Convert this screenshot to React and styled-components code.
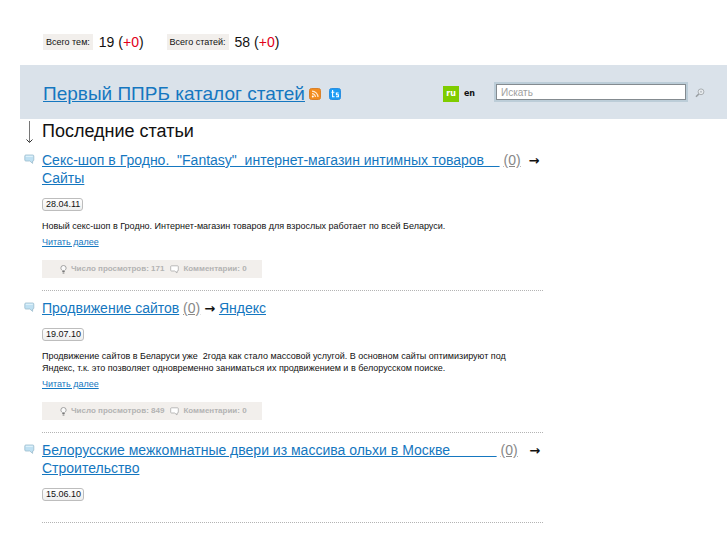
import React from 'react';
import styled, { createGlobalStyle } from 'styled-components';

const GlobalStyle = createGlobalStyle`
  body {
    margin: 0;
    background: #fff;
    color: #111;
    font-family: "Liberation Sans", Arial, Helvetica, sans-serif;
    font-size: 9px;
    line-height: 12px;
  }
`;

const Page = styled.div`
  padding: 34px 0 20px 20px;
`;

const Counters = styled.div`
  display: flex;
  gap: 23px;
  padding-left: 23px;
`;

const Counter = styled.div`
  display: flex;
  align-items: center;
  gap: 6px;
  font-size: 14px;
  line-height: 16px;
`;

const CounterLabel = styled.span`
  padding: 0 3px;
  background: #f2efec;
  font-size: 9px;
`;

const Added = styled.span`
  color: #e2001a;
`;

const Header = styled.header`
  display: flex;
  align-items: center;
  min-height: 54px;
  margin-top: 15px;
  padding: 0 20px 0 23px;
  box-sizing: border-box;
  background: #dae2ea;
`;

const SiteTitle = styled.h1`
  margin: 0;
  font-size: 19px;
  line-height: 24px;
  font-weight: 400;
  padding-top: 4px;
`;

const Link = styled.a`
  color: #1577c0;
  text-decoration: underline;
`;

const Feeds = styled.div`
  display: flex;
  gap: 8px;
  margin-left: 4px;
  padding-top: 4px;
`;

const IconLink = styled.a`
  display: block;
  height: 12px;

  svg {
    display: block;
  }
`;

const Tools = styled.div`
  display: flex;
  align-items: center;
  margin-left: auto;
`;

const Languages = styled.nav`
  display: flex;
  align-items: center;
  gap: 5px;
  padding-top: 3px;
  font-family: "DejaVu Sans", Verdana, sans-serif;
  font-size: 8px;
  font-weight: 700;
  line-height: 16px;
`;

const Language = styled.a`
  padding: 0 ${({ $active }) => ($active ? '3px' : '0')};
  background: ${({ $active }) => ($active ? '#7fcc00' : 'transparent')};
  color: ${({ $active }) => ($active ? '#fff' : '#111')};
  text-decoration: none;
`;

const Search = styled.form`
  display: flex;
  align-items: center;
  gap: 7px;
  margin-left: 21px;
`;

const SearchInput = styled.input`
  width: 190px;
  height: 16px;
  box-sizing: border-box;
  padding: 0 4px;
  border: 1px solid #848b90;
  border-radius: 0;
  box-shadow: 0 0 0 2px #bccdd8;
  background: #fff;
  font-family: inherit;
  font-size: 10px;

  &::placeholder {
    color: #a0a0a0;
    opacity: 1;
  }
`;

const SearchButton = styled.button`
  padding: 3px 2px 1px;
  border: 0;
  background: none;

  svg {
    display: block;
  }
`;

const Main = styled.main`
  max-width: 523px;
`;

const SectionTitle = styled.h2`
  display: flex;
  align-items: center;
  gap: 8px;
  margin: 0;
  padding-left: 5px;
  font-size: 18px;
  line-height: 24px;
  font-weight: 400;
`;

const Article = styled.article`
  display: grid;
  grid-template-columns: 18px 1fr;
  padding: 8px 0 0 4px;
`;

const Bubble = styled.div`
  padding-top: 3px;
`;

const Body = styled.div`
  padding-bottom: ${({ $short }) => ($short ? '21px' : '12px')};
  border-bottom: 1px dotted #b4b4b4;
`;

const Headline = styled.h3`
  margin: 0;
  font-size: 14px;
  line-height: 18px;
  font-weight: 400;
`;

const Count = styled.a`
  color: #888;
`;

const Arrow = styled.b`
  font-family: "DejaVu Sans", sans-serif;
  font-size: 13px;
  line-height: 16px;
`;

const DateBadge = styled.time`
  display: block;
  width: max-content;
  margin-top: 11px;
  padding: 0 2px 0 3px;
  border: 1px solid #bdbdbd;
  border-radius: 3px;
  background: linear-gradient(#fff, #eee);
  line-height: 11px;
`;

const Summary = styled.p`
  margin: 9px 0 4px;
  padding-right: 12px;
`;

const Meta = styled.div`
  display: flex;
  align-items: center;
  gap: 6px;
  width: 220px;
  height: 18px;
  margin-top: 12px;
  padding-left: 18px;
  box-sizing: border-box;
  background: #f2efec;
  color: #b3b3b3;
  font-size: 8px;
  font-weight: 700;
`;

const MetaItem = styled.span`
  display: flex;
  align-items: center;
  gap: 4px;
`;

const RssIcon = () => (
  <svg width="12" height="12" viewBox="0 0 12 12">
    <rect x="0.5" y="0.5" width="11" height="11" rx="2" fill="#f28c1e" stroke="#d9812b" />
    <circle cx="3.8" cy="8.4" r="1" fill="#fff" />
    <path d="M3 5.6a3.4 3.4 0 0 1 3.4 3.5M3 3.2a6 6 0 0 1 6 5.9" fill="none" stroke="#ffe9cf" strokeWidth="1.2" />
  </svg>
);

const TopicsIcon = () => (
  <svg width="12" height="12" viewBox="0 0 12 12">
    <rect x="0.5" y="0.5" width="11" height="11" rx="2" fill="#1b9bf5" stroke="#2a8fe0" />
    <path d="M3.6 2v6.8h2M2.4 4.3h3M9.6 5H7.4v1.8h2v2H7" fill="none" stroke="#fff" strokeWidth="1.1" />
  </svg>
);

const SearchIcon = () => (
  <svg width="10" height="10" viewBox="0 0 10 10">
    <circle cx="6" cy="3.8" r="2.9" fill="#e8ecef" stroke="#a9aeb2" />
    <circle cx="6" cy="3.8" r="1" fill="#b9bfc4" />
    <path d="M3.8 6 1 8.8" stroke="#999ea2" strokeWidth="1.6" />
  </svg>
);

const ArrowDownIcon = () => (
  <svg width="9" height="24" viewBox="0 0 9 24">
    <path d="M4.5 2v21" stroke="#777" />
    <path d="M1.5 20.5 4.5 23.5l3-3" fill="none" stroke="#333" />
  </svg>
);

const BubbleIcon = () => (
  <svg width="11" height="10" viewBox="0 0 11 10">
    <path d="M1.8 1h7q1 0 1 1v4q0 1-1 1h-.2v2.4L5.8 7h-4q-1 0-1-1V2q0-1 1-1z" fill="#bfe0f2" stroke="#9dbccd" strokeWidth="0.8" />
    <path d="M1.8 2.3h7" stroke="#e6f5fc" />
  </svg>
);

const BulbIcon = () => (
  <svg width="7" height="9" viewBox="0 0 7 9">
    <path d="M2.4 5.6C1.2 4.6.9 3.8.9 2.9a2.6 2.4 0 0 1 5.2 0c0 .9-.3 1.700-1.500 2.700z" fill="#fafafa" stroke="#999" strokeWidth="0.9" />
    <path d="M2.3 6.5h2.4M2.6 8h1.8" stroke="#777" />
  </svg>
);

const CommentIcon = () => (
  <svg width="9" height="9" viewBox="0 0 9 9">
    <path d="M1.5.8h6q.8 0 .8.8v3.6q0 .8-.8.8H7v2L4.7 6H1.5q-.8 0-.8-.8V1.6q0-.8.8-.8z" fill="#fff" stroke="#aaa" strokeWidth="0.8" />
  </svg>
);

const articles = [
  {
    title: 'Секс-шоп в Гродно.\u00a0 "Fantasy"\u00a0 интернет-магазин интимных товаров' + '\u00a0'.repeat(4),
    gap: '\u00a0 ',
    category: 'Сайты',
    date: '28.04.11',
    summary: 'Новый секс-шоп в Гродно. Интернет-магазин товаров для взрослых работает по всей Беларуси.',
    views: 171,
  },
  {
    title: 'Продвижение сайтов',
    gap: ' ',
    category: 'Яндекс',
    date: '19.07.10',
    summary: 'Продвижение сайтов в Беларуси уже\u00a0 2года как стало массовой услугой. В основном сайты оптимизируют под Яндекс, т.к. это позволяет одновременно заниматься их продвижением и в белорусском поиске.',
    views: 849,
  },
  {
    title: 'Белорусские межкомнатные двери из массива ольхи в Москве' + '\u00a0'.repeat(12),
    gap: '\u00a0\u00a0 ',
    category: 'Строительство',
    date: '15.06.10',
  },
];

const ArticleItem = ({ article }) => (
  <Article>
    <Bubble><BubbleIcon /></Bubble>
    <Body $short={!article.summary}>
      <Headline>
        <Link href="#article">{article.title}</Link> <Count href="#comments">(0)</Count>
        {article.gap}
        <Arrow>→</Arrow> <Link href="#category">{article.category}</Link>
      </Headline>
      <DateBadge>{article.date}</DateBadge>
      {article.summary && (
        <>
          <Summary>{article.summary}</Summary>
          <Link href="#more">Читать далее</Link>
          <Meta>
            <MetaItem><BulbIcon /> Число просмотров: {article.views}</MetaItem>
            <MetaItem><CommentIcon /> Комментарии: 0</MetaItem>
          </Meta>
        </>
      )}
    </Body>
  </Article>
);

const App = () => {
  return (
    <>
      <GlobalStyle />
      <Page>
        <Counters>
          <Counter>
            <CounterLabel>Всего тем:</CounterLabel>
            <span>19 (<Added>+0</Added>)</span>
          </Counter>
          <Counter>
            <CounterLabel>Всего статей:</CounterLabel>
            <span>58 (<Added>+0</Added>)</span>
          </Counter>
        </Counters>
        <Header>
          <SiteTitle><Link href="#home">Первый ППРБ каталог статей</Link></SiteTitle>
          <Feeds>
            <IconLink href="#rss" aria-label="RSS"><RssIcon /></IconLink>
            <IconLink href="#topics" aria-label="Темы"><TopicsIcon /></IconLink>
          </Feeds>
          <Tools>
            <Languages>
              <Language href="#ru" $active>ru</Language>
              <Language href="#en">en</Language>
            </Languages>
            <Search>
              <SearchInput type="text" placeholder="Искать" aria-label="Искать" />
              <SearchButton type="button" aria-label="Найти"><SearchIcon /></SearchButton>
            </Search>
          </Tools>
        </Header>
        <Main>
          <SectionTitle><ArrowDownIcon />Последние статьи</SectionTitle>
          {articles.map((article) => (
            <ArticleItem key={article.date} article={article} />
          ))}
        </Main>
      </Page>
    </>
  );
};

export default App;
